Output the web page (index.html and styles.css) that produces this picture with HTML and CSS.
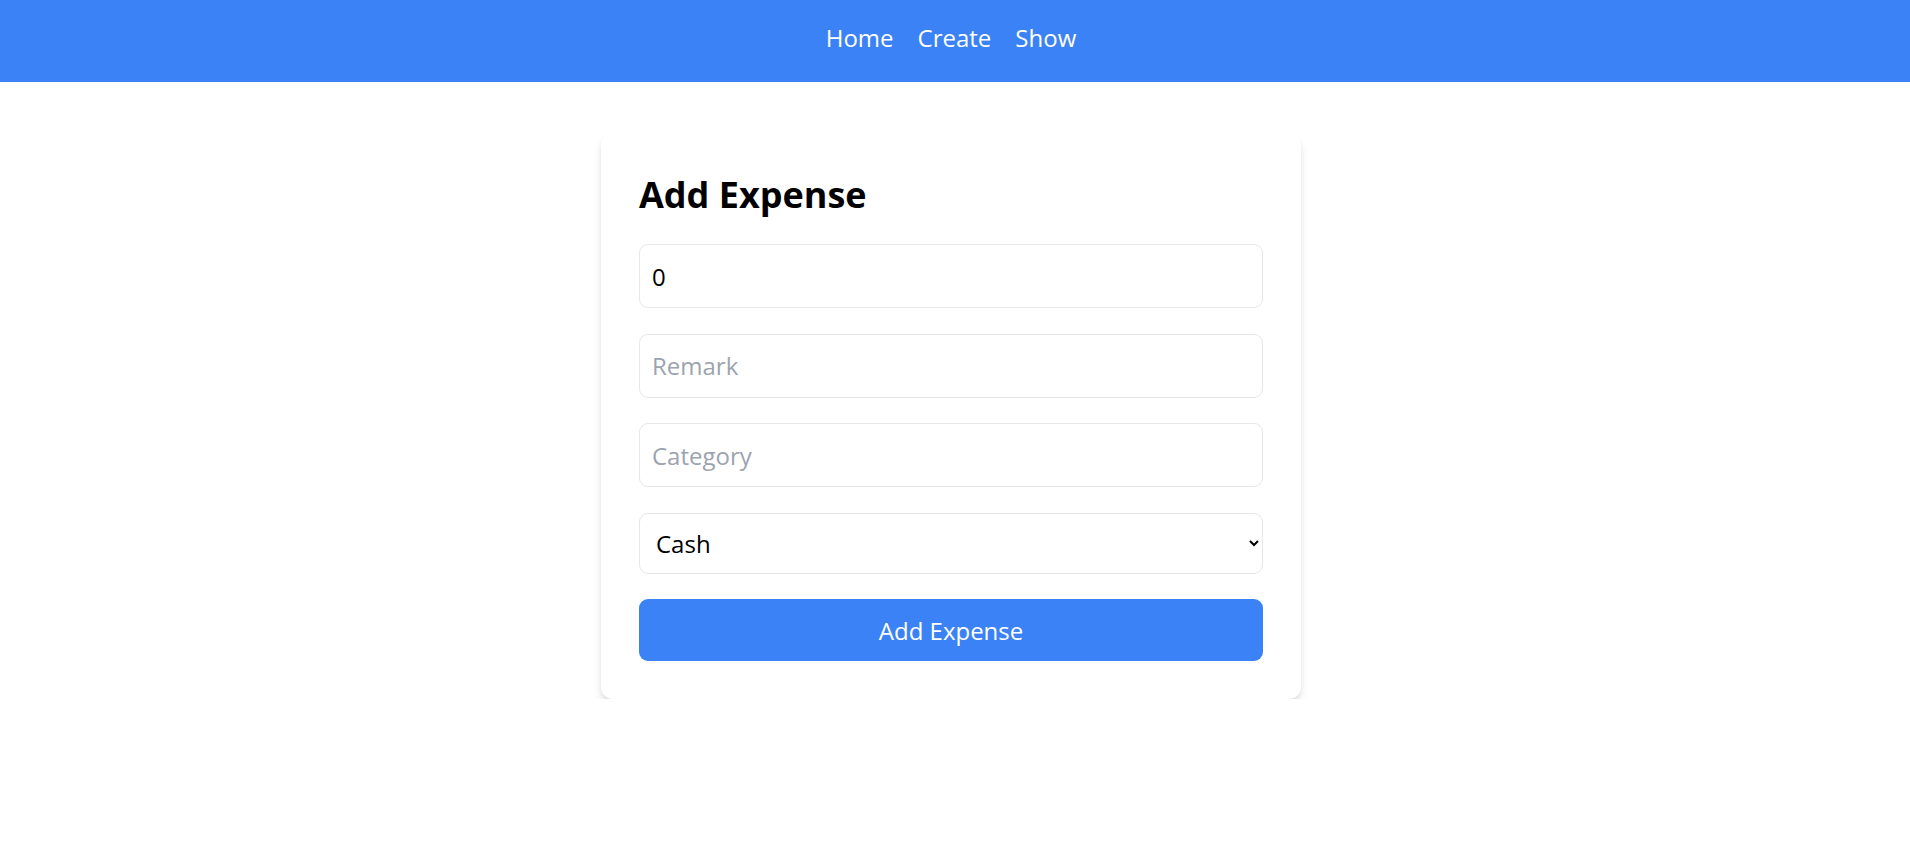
FILE: index.html
```html
<!DOCTYPE html>
<html lang="en">
<head>
<meta charset="utf-8">
<title>Add Expense</title>
<link rel="stylesheet" href="styles.css">
</head>
<body>
<nav class="navbar">
  <a class="nav-link" href="#">Home</a>
  <a class="nav-link" href="#">Create</a>
  <a class="nav-link" href="#">Show</a>
</nav>
<main class="page">
  <form class="card">
    <h1 class="card-title">Add Expense</h1>
    <input class="field" type="number" value="0">
    <input class="field" type="text" placeholder="Remark">
    <input class="field" type="text" placeholder="Category">
    <select class="field field-select">
      <option>Cash</option>
      <option>Card</option>
    </select>
    <button class="submit" type="button">Add Expense</button>
  </form>
</main>
</body>
</html>
```

FILE: styles.css
```css
* { box-sizing: border-box; }

html, body {
  margin: 0;
  padding: 0;
  background: #ffffff;
  font-family: "Open Sans", "Noto Sans", "Liberation Sans", sans-serif;
}

.navbar {
  height: 82px;
  background: #3b82f6;
  display: flex;
  justify-content: center;
  align-items: flex-start;
  gap: 24px;
  padding: 20px 8px 0 0;
}

.nav-link {
  color: #ffffff;
  text-decoration: none;
  font-size: 24px;
  line-height: 36px;
}

.page {
  display: flex;
  justify-content: center;
  padding: 51px 8px 0 0;
}

.card {
  width: 700px;
  background: #ffffff;
  border-radius: 12px;
  padding: 38px;
  box-shadow: 0 6px 10px -1.5px rgba(0, 0, 0, 0.12), 0 3px 6px -3px rgba(0, 0, 0, 0.12);
  display: flex;
  flex-direction: column;
}

.card-title {
  margin: 0 0 25px 0;
  font-size: 36px;
  line-height: 48px;
  font-weight: 700;
  color: #000000;
}

.field {
  width: 100%;
  height: 64px;
  margin: 0 0 25.5px 0;
  padding: 0 12px;
  border: 1.5px solid #e5e7eb;
  border-radius: 9px;
  background: #ffffff;
  font-family: inherit;
  font-size: 24px;
  color: #000000;
  outline: none;
}

.field::placeholder { color: #9ca3af; }

.field::-webkit-outer-spin-button,
.field::-webkit-inner-spin-button { -webkit-appearance: none; margin: 0; }

.field-select {
  height: 61px;
}

.submit {
  width: 100%;
  height: 62px;
  border: none;
  border-radius: 9px;
  background: #3b82f6;
  color: #ffffff;
  font-family: inherit;
  font-size: 24px;
  cursor: pointer;
}
```
